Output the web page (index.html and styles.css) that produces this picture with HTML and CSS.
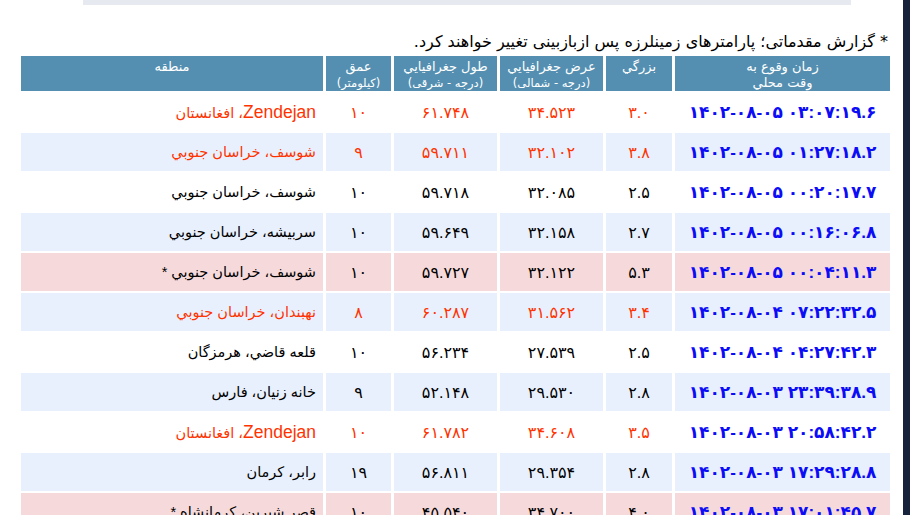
FILE: index.html
```html
<!DOCTYPE html>
<html lang="fa">
<head>
<meta charset="utf-8">
<title>زمینلرزه‌ها</title>
<link rel="stylesheet" href="styles.css">
</head>
<body>
<div class="page">
  <main class="content">
    <div class="topbox"></div>
    <p class="note" dir="rtl">* گزارش مقدماتی؛ پارامترهای زمینلرزه پس ازبازبینی تغییر خواهند کرد.</p>
    <table class="quakes" dir="rtl">
      <colgroup>
        <col class="c-time"><col class="c-mag"><col class="c-lat"><col class="c-lon"><col class="c-depth"><col class="c-region">
      </colgroup>
      <thead>
        <tr>
          <th>زمان وقوع به<br>وقت محلي</th>
          <th>بزرگي</th>
          <th>عرض جغرافيايي<br><small>(درجه - شمالی)</small></th>
          <th>طول جغرافيايي<br><small>(درجه - شرقی)</small></th>
          <th>عمق<br><small>(کیلومتر)</small></th>
          <th>منطقه</th>
        </tr>
      </thead>
      <tbody>
        <tr class="odd hot">
          <td class="time"><span dir="ltr">۱۴۰۲-۰۸-۰۵ ۰۳:۰۷:۱۹.۶</span></td>
          <td class="num">۳.۰</td><td class="num">۳۴.۵۲۳</td><td class="num">۶۱.۷۴۸</td><td class="num">۱۰</td>
          <td class="region"><span class="lat">Zendejan</span>، افغانستان</td>
        </tr>
        <tr class="even hot">
          <td class="time"><span dir="ltr">۱۴۰۲-۰۸-۰۵ ۰۱:۲۷:۱۸.۲</span></td>
          <td class="num">۳.۸</td><td class="num">۳۲.۱۰۲</td><td class="num">۵۹.۷۱۱</td><td class="num">۹</td>
          <td class="region">شوسف، خراسان جنوبي</td>
        </tr>
        <tr class="odd">
          <td class="time"><span dir="ltr">۱۴۰۲-۰۸-۰۵ ۰۰:۲۰:۱۷.۷</span></td>
          <td class="num">۲.۵</td><td class="num">۳۲.۰۸۵</td><td class="num">۵۹.۷۱۸</td><td class="num">۱۰</td>
          <td class="region">شوسف، خراسان جنوبي</td>
        </tr>
        <tr class="even">
          <td class="time"><span dir="ltr">۱۴۰۲-۰۸-۰۵ ۰۰:۱۶:۰۶.۸</span></td>
          <td class="num">۲.۷</td><td class="num">۳۲.۱۵۸</td><td class="num">۵۹.۶۴۹</td><td class="num">۱۰</td>
          <td class="region">سربيشه، خراسان جنوبي</td>
        </tr>
        <tr class="strong">
          <td class="time"><span dir="ltr">۱۴۰۲-۰۸-۰۵ ۰۰:۰۴:۱۱.۳</span></td>
          <td class="num">۵.۳</td><td class="num">۳۲.۱۲۲</td><td class="num">۵۹.۷۲۷</td><td class="num">۱۰</td>
          <td class="region">شوسف، خراسان جنوبي *</td>
        </tr>
        <tr class="even hot">
          <td class="time"><span dir="ltr">۱۴۰۲-۰۸-۰۴ ۰۷:۲۲:۳۲.۵</span></td>
          <td class="num">۳.۴</td><td class="num">۳۱.۵۶۲</td><td class="num">۶۰.۲۸۷</td><td class="num">۸</td>
          <td class="region">نهبندان، خراسان جنوبي</td>
        </tr>
        <tr class="odd">
          <td class="time"><span dir="ltr">۱۴۰۲-۰۸-۰۴ ۰۴:۲۷:۴۲.۳</span></td>
          <td class="num">۲.۵</td><td class="num">۲۷.۵۳۹</td><td class="num">۵۶.۲۳۴</td><td class="num">۱۰</td>
          <td class="region">قلعه قاضي، هرمزگان</td>
        </tr>
        <tr class="even">
          <td class="time"><span dir="ltr">۱۴۰۲-۰۸-۰۳ ۲۳:۳۹:۳۸.۹</span></td>
          <td class="num">۲.۸</td><td class="num">۲۹.۵۳۰</td><td class="num">۵۲.۱۴۸</td><td class="num">۹</td>
          <td class="region">خانه زنيان، فارس</td>
        </tr>
        <tr class="odd hot">
          <td class="time"><span dir="ltr">۱۴۰۲-۰۸-۰۳ ۲۰:۵۸:۴۲.۲</span></td>
          <td class="num">۳.۵</td><td class="num">۳۴.۶۰۸</td><td class="num">۶۱.۷۸۲</td><td class="num">۱۰</td>
          <td class="region"><span class="lat">Zendejan</span>، افغانستان</td>
        </tr>
        <tr class="even">
          <td class="time"><span dir="ltr">۱۴۰۲-۰۸-۰۳ ۱۷:۲۹:۲۸.۸</span></td>
          <td class="num">۲.۸</td><td class="num">۲۹.۳۵۴</td><td class="num">۵۶.۸۱۱</td><td class="num">۱۹</td>
          <td class="region">رابر، کرمان</td>
        </tr>
        <tr class="strong">
          <td class="time"><span dir="ltr">۱۴۰۲-۰۸-۰۳ ۱۷:۰۱:۴۵.۷</span></td>
          <td class="num">۴.۰</td><td class="num">۳۴.۷۰۰</td><td class="num">۴۵.۵۴۰</td><td class="num">۱۰</td>
          <td class="region">قصر شيرين، کرمانشاه *</td>
        </tr>
      </tbody>
    </table>
  </main>
  <aside class="edge"></aside>
</div>
</body>
</html>
```

FILE: styles.css
```css
html, body {
  margin: 0;
  padding: 0;
  background: #ffffff;
  overflow: hidden;
}

.page {
  display: flex;
  width: 910px;
  height: 515px;
  overflow: hidden;
}

.content {
  width: 903px;
  flex: none;
}

.edge {
  width: 7px;
  flex: none;
  background: #17223b;
}

.topbox {
  margin-left: 83px;
  width: 768px;
  height: 5px;
  background: #e6e9ef;
}

.note {
  margin: 26px 15px 0 0;
  height: 22px;
  font-family: "DejaVu Sans", sans-serif;
  font-size: 16px;
  line-height: 22px;
  color: #000;
  text-align: right;
}

.quakes {
  margin: 1px 0 0 18px;
  width: 875px;
  table-layout: fixed;
  border-collapse: separate;
  border-spacing: 3px 2px;
  font-family: "Liberation Sans", "DejaVu Sans", sans-serif;
}

.c-time { width: 215px; }
.c-mag { width: 66px; }
.c-lat { width: 103px; }
.c-lon { width: 103px; }
.c-depth { width: 65px; }
.c-region { width: 302px; }

.quakes th {
  height: 35px;
  padding: 3px 0 0;
  box-sizing: border-box;
  background: #548fb1;
  color: #ffffff;
  font-family: "DejaVu Sans", sans-serif;
  font-weight: normal;
  font-size: 13px;
  line-height: 16px;
  vertical-align: top;
  text-align: center;
}

.quakes th small {
  font-size: 11.5px;
  line-height: 14px;
}

.quakes td {
  height: 38px;
  padding: 0;
  text-align: center;
  vertical-align: middle;
  font-size: 16px;
  color: #000;
}

.quakes td.time {
  color: #0c0cf6;
  font-weight: bold;
  font-size: 17px;
}

.quakes td.region {
  text-align: right;
  padding-right: 7px;
  font-size: 14.5px;
}

.quakes td.region .lat {
  font-family: "Liberation Sans", sans-serif;
  font-size: 17.5px;
}

.quakes tr.odd td { background: #ffffff; }
.quakes tr.even td { background: #e9f0fd; }
.quakes tr.strong td { background: #f6dadb; }

.quakes tr.hot td.num,
.quakes tr.hot td.region {
  color: #ff3300;
}
```
